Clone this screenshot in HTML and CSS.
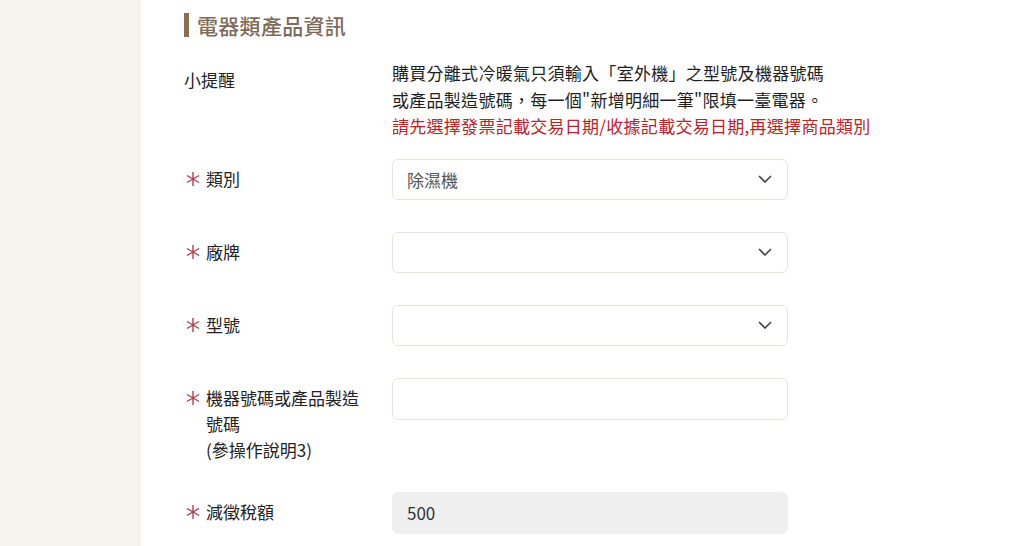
FILE: index.html
```html
<!DOCTYPE html>
<html lang="zh-Hant">
<head>
    <meta charset="UTF-8">
    <meta name="viewport" content="width=device-width, initial-scale=1.0">
    <title>電器類產品資訊</title>
    <link rel="stylesheet" href="styles.css">
</head>
<body>
    <div class="page">
        <div class="side"></div>
        <div class="main">
            <h2 class="section-title">電器類產品資訊</h2>

            <div class="form-row row-tip">
                <div class="form-label">小提醒</div>
                <div class="form-field tip">
                    <div>購買分離式冷暖氣只須輸入「室外機」之型號及機器號碼</div>
                    <div>或產品製造號碼，每一個"新增明細一筆"限填一臺電器。</div>
                    <div class="tip-warn">請先選擇發票記載交易日期/收據記載交易日期,再選擇商品類別</div>
                </div>
            </div>

            <div class="form-row">
                <div class="form-label"><svg class="req" width="14" height="14" viewBox="0 0 14 14"><path d="M7 0v14M0.9 3.5l12.2 7M0.9 10.5l12.2-7"/></svg>類別</div>
                <div class="form-field">
                    <div class="select">
                        <span class="select-value">除濕機</span>
                        <svg class="chevron" width="14" height="8" viewBox="0 0 14 8"><path d="M1 1l6 6 6-6" fill="none" stroke="#444" stroke-width="1.6"/></svg>
                    </div>
                </div>
            </div>

            <div class="form-row">
                <div class="form-label"><svg class="req" width="14" height="14" viewBox="0 0 14 14"><path d="M7 0v14M0.9 3.5l12.2 7M0.9 10.5l12.2-7"/></svg>廠牌</div>
                <div class="form-field">
                    <div class="select">
                        <span class="select-value"></span>
                        <svg class="chevron" width="14" height="8" viewBox="0 0 14 8"><path d="M1 1l6 6 6-6" fill="none" stroke="#444" stroke-width="1.6"/></svg>
                    </div>
                </div>
            </div>

            <div class="form-row">
                <div class="form-label"><svg class="req" width="14" height="14" viewBox="0 0 14 14"><path d="M7 0v14M0.9 3.5l12.2 7M0.9 10.5l12.2-7"/></svg>型號</div>
                <div class="form-field">
                    <div class="select">
                        <span class="select-value"></span>
                        <svg class="chevron" width="14" height="8" viewBox="0 0 14 8"><path d="M1 1l6 6 6-6" fill="none" stroke="#444" stroke-width="1.6"/></svg>
                    </div>
                </div>
            </div>

            <div class="form-row row-tall">
                <div class="form-label"><svg class="req" width="14" height="14" viewBox="0 0 14 14"><path d="M7 0v14M0.9 3.5l12.2 7M0.9 10.5l12.2-7"/></svg><span>機器號碼或產品製造號碼<br>(參操作說明3)</span></div>
                <div class="form-field">
                    <input type="text" class="text-input">
                </div>
            </div>

            <div class="form-row">
                <div class="form-label"><svg class="req" width="14" height="14" viewBox="0 0 14 14"><path d="M7 0v14M0.9 3.5l12.2 7M0.9 10.5l12.2-7"/></svg>減徵稅額</div>
                <div class="form-field">
                    <input type="text" class="text-input readonly" value="500" readonly>
                </div>
            </div>
        </div>
    </div>
</body>
</html>
```

FILE: styles.css
```css
body {
    margin: 0;
    background-color: #fff;
    font-family: "Noto Sans CJK TC", "Noto Sans", sans-serif;
    font-size: 17px;
    color: #222;
}
.page {
    display: flex;
    height: 546px;
    overflow: hidden;
}
.side {
    width: 141px;
    flex-shrink: 0;
    background-color: #f7f4ef;
}
.main {
    flex: 1;
    padding-left: 43px;
}
.section-title {
    margin: 13px 0 23px;
    padding-left: 8px;
    border-left: 5px solid #8b6d4f;
    height: 24px;
    line-height: 24px;
    font-size: 21px;
    font-weight: 500;
    color: #7d6a58;
    letter-spacing: 0.3px;
}
.form-row {
    display: flex;
    margin-bottom: 32px;
}
.row-tip {
    margin-bottom: 19px;
}
.row-tall {
    margin-bottom: 29px;
}
.form-label {
    width: 208px;
    flex-shrink: 0;
    display: flex;
    align-items: flex-start;
    padding-top: 7px;
    line-height: 26px;
}
.row-tall .form-label {
    width: 180px;
    padding-right: 28px;
}
.req {
    flex-shrink: 0;
    margin: 6px 6px 0 2px;
    fill: none;
    stroke: #b0404e;
    stroke-width: 1.4;
}
.tip {
    line-height: 26.5px;
    color: #1e1e1e;
    letter-spacing: 0.28px;
}
.tip-warn {
    color: #bb2229;
}
.select {
    width: 396px;
    height: 41px;
    box-sizing: border-box;
    border: 1px solid #e9e3d8;
    border-radius: 6px;
    display: flex;
    align-items: center;
    justify-content: space-between;
    padding: 0 15px 0 14px;
    color: #555;
}
.text-input {
    width: 396px;
    height: 42px;
    box-sizing: border-box;
    border: 1px solid #e9e3d8;
    border-radius: 6px;
    padding: 0 14px;
    font-family: inherit;
    font-size: 17px;
    color: #333;
    background: #fff;
    outline: none;
}
.text-input.readonly {
    background-color: #efefef;
    border-color: #efefef;
}
```
